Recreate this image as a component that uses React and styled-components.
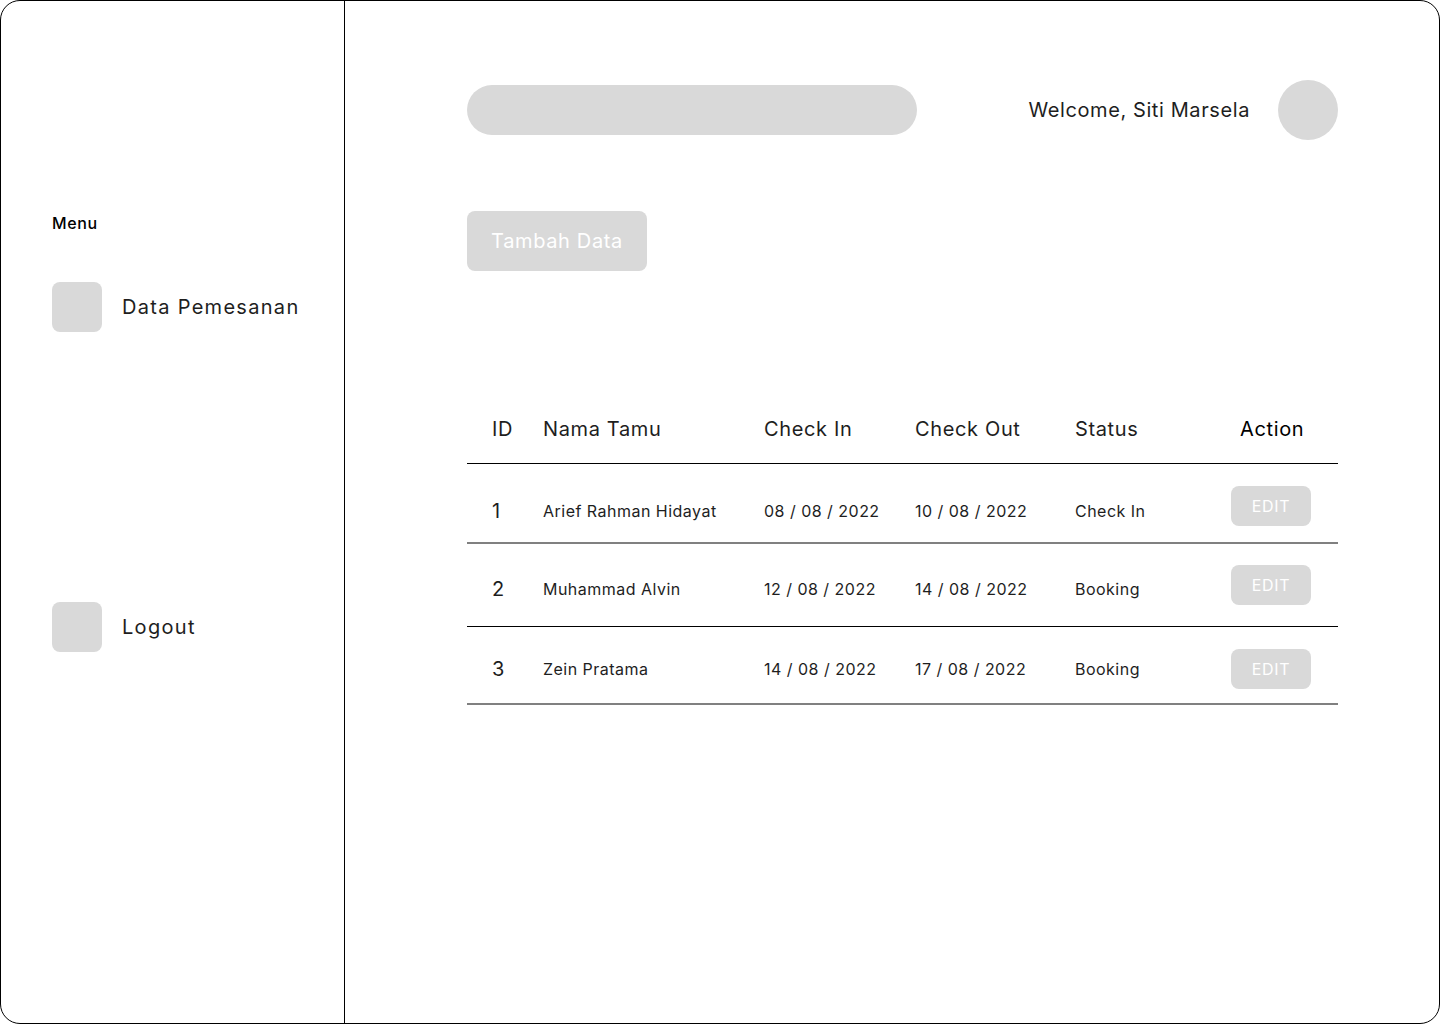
import React from "react";
import styled, { createGlobalStyle } from "styled-components";

const Global = createGlobalStyle`
  html, body { margin: 0; padding: 0; background: #fff; }
  body { font-family: "Inter", "Noto Sans", sans-serif; color: #1e1e1e; letter-spacing: 0.04em; }
  * { box-sizing: border-box; }
`;

const Frame = styled.div`
  width: 1440px;
  height: 1024px;
  border: 1px solid #000;
  border-radius: 20px;
  display: flex;
  overflow: hidden;
  background: #fff;
`;

const Sidebar = styled.aside`
  width: 344px;
  flex: none;
  border-right: 1px solid #000;
  padding: 210px 0 0 51px;
  display: flex;
  flex-direction: column;
`;

const MenuLabel = styled.div`
  font-size: 16px;
  line-height: 24px;
  font-weight: 500;
  color: #000;
`;

const NavItem = styled.div`
  display: flex;
  align-items: center;
  gap: 20px;
  margin-top: ${(p) => p.$top}px;
  font-size: 20px;
  letter-spacing: 0.065em;
  color: #1e1e1e;
`;

const NavIcon = styled.div`
  width: 50px;
  height: 50px;
  border-radius: 8px;
  background: #d9d9d9;
`;

const Main = styled.main`
  flex: 1;
  padding: 79px 101px 0 122px;
  display: flex;
  flex-direction: column;
`;

const TopBar = styled.div`
  height: 60px;
  display: flex;
  align-items: center;
  justify-content: space-between;
`;

const Search = styled.div`
  width: 450px;
  height: 50px;
  border-radius: 25px;
  background: #d9d9d9;
`;

const User = styled.div`
  display: flex;
  align-items: center;
  gap: 28px;
  font-size: 20px;
  letter-spacing: 0.03em;
  color: #1e1e1e;
`;

const Avatar = styled.div`
  width: 60px;
  height: 60px;
  border-radius: 50%;
  background: #d9d9d9;
`;

const AddButton = styled.button`
  margin-top: 71px;
  width: 180px;
  height: 60px;
  border: none;
  border-radius: 8px;
  background: #d9d9d9;
  color: #fff;
  font-family: inherit;
  letter-spacing: inherit;
  font-size: 20px;
  align-self: flex-start;
  padding: 0;
`;

const Table = styled.div`
  margin-top: 124px;
  display: flex;
  flex-direction: column;
`;

const Row = styled.div`
  display: grid;
  grid-template-columns: 51px 221px 151px 160px 156px 1fr;
  align-items: center;
  padding-left: 25px;
  height: ${(p) => p.$h}px;
  border-bottom: ${(p) => (p.$soft ? "2px solid #808080" : "1px solid #000")};
`;

const HeadCell = styled.div`
  font-size: 20px;
  color: ${(p) => (p.$dark ? "#000" : "#1e1e1e")};
  padding-left: ${(p) => p.$pl || 0}px;
`;

const Cell = styled.div`
  font-size: ${(p) => (p.$big ? 20 : 16)}px;
  letter-spacing: 0.03em;
  color: #1e1e1e;
  padding-top: ${(p) => p.$pt}px;
`;

const EditButton = styled.button`
  width: 80px;
  height: 40px;
  border: none;
  border-radius: 8px;
  background: #d9d9d9;
  color: #fff;
  font-family: inherit;
  letter-spacing: inherit;
  font-size: 16px;
  padding: 0;
  margin-top: ${(p) => p.$mt}px;
`;

const rows = [
  { id: 1, name: "Arief Rahman Hidayat", in: "08 / 08 / 2022", out: "10 / 08 / 2022", status: "Check In", h: 80, soft: true, pt: 16, bt: 6 },
  { id: 2, name: "Muhammad Alvin", in: "12 / 08 / 2022", out: "14 / 08 / 2022", status: "Booking", h: 83, soft: false, pt: 8, bt: 0 },
  { id: 3, name: "Zein Pratama", in: "14 / 08 / 2022", out: "17 / 08 / 2022", status: "Booking", h: 78, soft: true, pt: 8, bt: 8 },
];

export default function App() {
  return (
    <>
      <Global />
      <Frame>
        <Sidebar>
          <MenuLabel>Menu</MenuLabel>
          <NavItem $top={47}>
            <NavIcon />
            Data Pemesanan
          </NavItem>
          <NavItem $top={270}>
            <NavIcon />
            Logout
          </NavItem>
        </Sidebar>
        <Main>
          <TopBar>
            <Search />
            <User>
              Welcome, Siti Marsela
              <Avatar />
            </User>
          </TopBar>
          <AddButton>Tambah Data</AddButton>
          <Table>
            <Row $h={69}>
              <HeadCell>ID</HeadCell>
              <HeadCell>Nama Tamu</HeadCell>
              <HeadCell>Check In</HeadCell>
              <HeadCell>Check Out</HeadCell>
              <HeadCell>Status</HeadCell>
              <HeadCell $dark $pl={9}>Action</HeadCell>
            </Row>
            {rows.map((r) => (
              <Row key={r.id} $h={r.h} $soft={r.soft}>
                <Cell $big $pt={r.pt}>{r.id}</Cell>
                <Cell $pt={r.pt}>{r.name}</Cell>
                <Cell $pt={r.pt}>{r.in}</Cell>
                <Cell $pt={r.pt}>{r.out}</Cell>
                <Cell $pt={r.pt}>{r.status}</Cell>
                <div>
                  <EditButton $mt={r.bt}>EDIT</EditButton>
                </div>
              </Row>
            ))}
          </Table>
        </Main>
      </Frame>
    </>
  );
}
